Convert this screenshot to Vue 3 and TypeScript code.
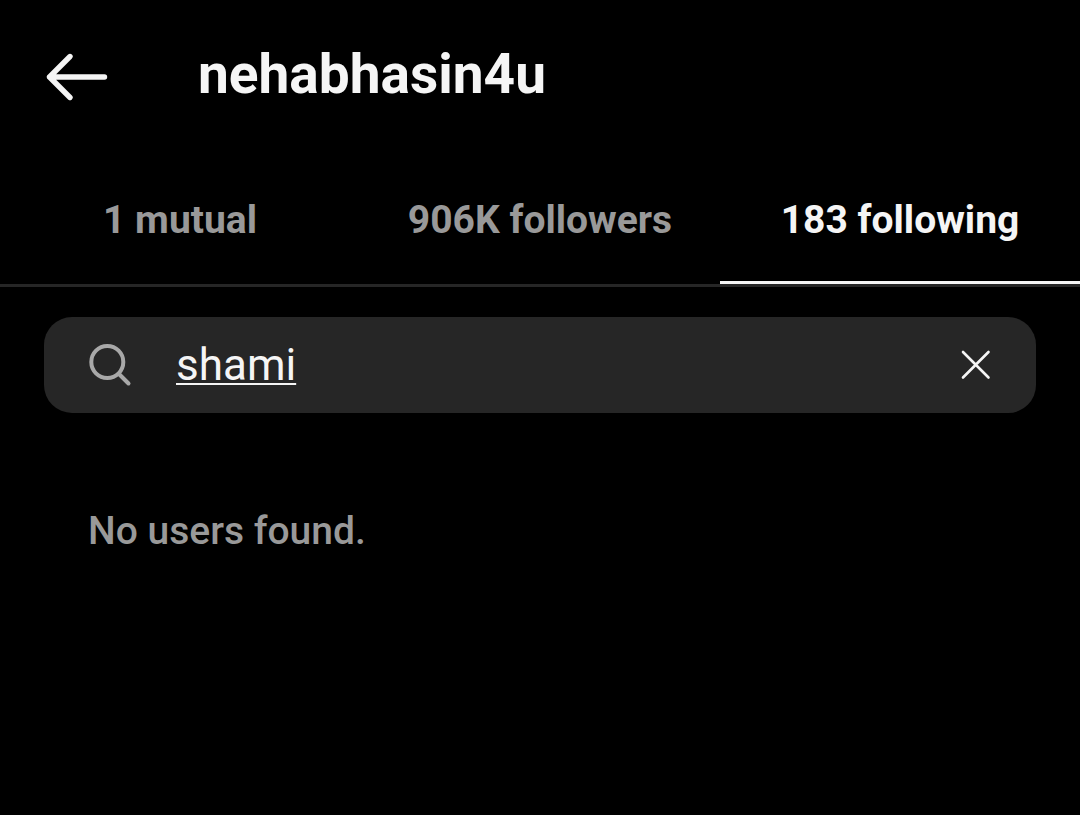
<script setup lang="ts">
import { ref } from 'vue'

interface Tab {
  id: string
  label: string
}

const tabs: Tab[] = [
  { id: 'mutual', label: '1 mutual' },
  { id: 'followers', label: '906K followers' },
  { id: 'following', label: '183 following' },
]
const active = ref('following')
const query = ref('shami')
</script>

<template>
  <main class="screen">
    <header class="top">
      <button class="icon-button" type="button" aria-label="Back">
        <svg width="64" height="52" viewBox="0 0 64 52" fill="none" stroke="currentColor" stroke-width="5.4" stroke-linecap="round" stroke-linejoin="round">
          <path d="M26 5.5 5.5 26 26 46.5M5.5 26h55" />
        </svg>
      </button>
      <h1 class="title">nehabhasin4u</h1>
    </header>

    <nav class="tabs" role="tablist">
      <button
        v-for="tab in tabs"
        :key="tab.id"
        class="tab"
        :class="{ active: tab.id === active }"
        type="button"
        role="tab"
        :aria-selected="tab.id === active"
        @click="active = tab.id"
      >{{ tab.label }}</button>
    </nav>

    <div class="search">
      <svg class="lens" width="44" height="44" viewBox="0 0 44 44" fill="none" stroke="currentColor" stroke-width="4" stroke-linecap="round">
        <circle cx="19.3" cy="19" r="16" />
        <path d="m31 31 9.5 9.5" />
      </svg>
      <input v-model="query" class="field" type="text" aria-label="Search" spellcheck="false" />
      <button class="icon-button" type="button" aria-label="Clear search" @click="query = ''">
        <svg width="32" height="32" viewBox="0 0 32 32" fill="none" stroke="currentColor" stroke-width="2.6" stroke-linecap="round">
          <path d="m3 3 25.5 25.5M28.5 3 3 28.5" />
        </svg>
      </button>
    </div>

    <p class="empty">No users found.</p>
  </main>
</template>

<style>
body {
  background: #000;
}
</style>

<style scoped>
.screen {
  min-height: 100vh;
  background: #000;
  color: #f5f5f5;
  font-family: Roboto, "Liberation Sans", sans-serif;
}
.icon-button {
  display: flex;
  padding: 0;
  border: 0;
  background: none;
  color: #f5f5f5;
}
.top {
  display: flex;
  align-items: center;
  gap: 90px;
  height: 154px;
  padding: 0 44px;
}
.title {
  margin: 0;
  padding-bottom: 6px;
  font-size: 55px;
  line-height: 64px;
  font-weight: 700;
}
.tabs {
  display: grid;
  grid-template-columns: repeat(3, 1fr);
  height: 133px;
  box-sizing: border-box;
  border-bottom: 3px solid #262626;
}
.tab {
  padding: 4px 0 0;
  border: 0;
  border-bottom: 3px solid transparent;
  background: none;
  color: #999;
  font: 700 39px/46px Roboto, "Liberation Sans", sans-serif;
}
.tab.active {
  border-color: #f5f5f5;
  color: #f5f5f5;
}
.search {
  display: flex;
  align-items: center;
  gap: 44px;
  height: 96px;
  margin: 30px 44px 0;
  padding: 0 44px;
  box-sizing: border-box;
  border-radius: 28px;
  background: #262626;
}
.lens {
  flex: none;
  color: #a8a8a8;
}
.field {
  flex: 1;
  min-width: 0;
  padding: 0;
  border: 0;
  outline: 0;
  background: none;
  color: #f5f5f5;
  font: 400 44px/52px Roboto, "Liberation Sans", sans-serif;
  text-decoration: underline;
  text-decoration-thickness: 2px;
  text-underline-offset: 3px;
}
.empty {
  margin: 95px 88px 0;
  color: #999;
  font-size: 39px;
  line-height: 46px;
  font-weight: 500;
}
</style>
